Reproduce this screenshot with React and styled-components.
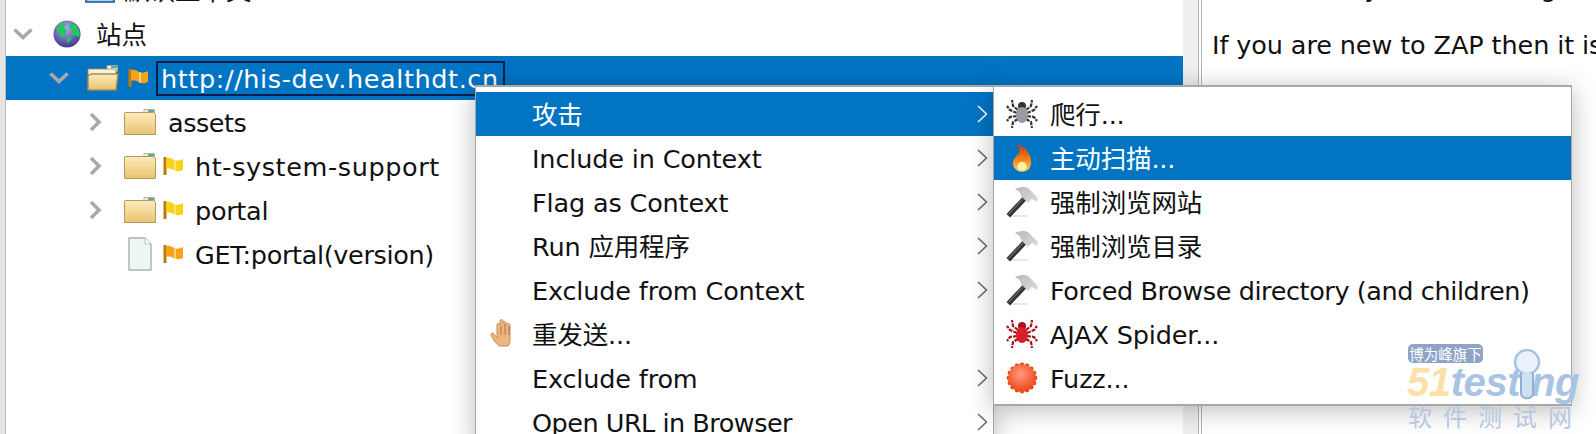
import React from 'react'
import styled, { createGlobalStyle } from 'styled-components'

const Global = createGlobalStyle`
    html, body { margin: 0; padding: 0; background: #fff; }
    #root { width: 1596px; height: 434px; overflow: hidden; }
`

const FONT = `"DejaVu Sans", "Noto Sans CJK SC", sans-serif`
const BLUE = '#0274c4'

const Page = styled.div`
    position: relative;
    width: 1596px;
    height: 434px;
    overflow: hidden;
    display: flex;
    font-family: ${FONT};
    font-size: 25.5px;
    line-height: 44px;
    color: #111;
    background: #fff;
`

const LeftEdge = styled.div`
    width: 5px;
    flex: none;
    background: #e4e4e4;
    border-right: 1px solid #bdbdbd;
`

const Tree = styled.div`
    width: 1177px;
    flex: none;
    margin-top: -32px;
`

const Row = styled.div`
    height: 44px;
    display: flex;
    align-items: center;
    padding-left: ${(p) => p.$indent}px;
    background: ${(p) => (p.$selected ? BLUE : 'transparent')};
    color: ${(p) => (p.$selected ? '#fff' : '#111')};
`

const Twisty = styled.svg`
    width: 20px;
    height: 20px;
    flex: none;
    margin-right: 16px;
`

const Spacer = styled.div`
    width: 36px;
    flex: none;
`

const IconSlot = styled.div`
    width: ${(p) => p.$w}px;
    height: 36px;
    flex: none;
    display: flex;
    align-items: center;
    justify-content: center;
`

const Label = styled.span`
    margin-left: ${(p) => p.$gap || 0}px;
    margin-top: 2px;
    white-space: nowrap;
    letter-spacing: ${(p) => p.$track || 0}px;
`

const Focus = styled.span`
    margin-left: 1px;
    padding: 1px 0 0 3px;
    height: 35px;
    width: 349px;
    box-sizing: border-box;
    display: flex;
    align-items: center;
    white-space: nowrap;
    border: 2px solid #0a1f4a;
    letter-spacing: 0.6px;
    overflow: hidden;
`

const Divider = styled.div`
    width: 15px;
    flex: none;
    background: #efefef;
    border-right: 1px solid #b5b5b5;
`

const Help = styled.div`
    flex: 1;
    border-left: 1px solid #b5b5b5;
    margin-left: 2px;
    padding-left: 10px;
    white-space: nowrap;
    overflow: hidden;
    line-height: 53px;
`

const HelpText = styled.div`
    margin-top: ${(p) => p.$top || 0}px;
    padding-left: ${(p) => p.$pad || 0}px;
    letter-spacing: -0.1px;
`

const Menu = styled.div`
    position: absolute;
    top: 85px;
    left: ${(p) => p.$left}px;
    width: ${(p) => p.$width}px;
    box-sizing: border-box;
    padding: 5px 0 4px;
    background: #fff;
    border: 1px solid #a8a8a8;
    border-width: 2px 1px 2px 1px;
    box-shadow: 0 4px 24px rgba(0, 0, 0, 0.27);
    z-index: ${(p) => p.$z};
`

const Item = styled.div`
    height: 44px;
    display: flex;
    align-items: center;
    background: ${(p) => (p.$active ? BLUE : 'transparent')};
    color: ${(p) => (p.$active ? '#fff' : '#111')};
`

const ItemIcon = styled.div`
    width: 56px;
    flex: none;
    display: flex;
    justify-content: center;
    align-items: center;
`

const ItemText = styled.span`
    flex: 1;
    margin-top: 2px;
    white-space: nowrap;
    letter-spacing: ${(p) => p.$track ?? -0.15}px;
`

const Arrow = styled.svg`
    width: 11px;
    height: 18px;
    flex: none;
    margin-right: 5px;
`

const Mark = styled.div`
    position: absolute;
    left: 1408px;
    top: 344px;
    width: 188px;
    height: 90px;
    z-index: 5;
    pointer-events: none;
`

const Badge = styled.div`
    position: absolute;
    left: 0;
    top: 0;
    width: 75px;
    height: 19px;
    border-radius: 5px;
    background: #8fa4c5;
    color: #fff;
    font: 14.5px "Noto Sans CJK SC", sans-serif;
    line-height: 19px;
    text-align: center;
    white-space: nowrap;
`

const BrandWord = styled.div`
    position: absolute;
    left: -1px;
    top: 21px;
    display: flex;
    font: italic 700 40px "Liberation Sans", sans-serif;
    line-height: 34px;
    letter-spacing: -0.4px;
    white-space: nowrap;
`

const BrandPart = styled.span`
    color: ${(p) => p.$color};
`

const BrandCn = styled.div`
    position: absolute;
    left: 0;
    top: 56px;
    width: 164px;
    display: flex;
    justify-content: space-between;
    color: #b6c8de;
    font: 24px "Noto Sans CJK SC", sans-serif;
    line-height: 32px;
`

const Lens = styled.svg`
    position: absolute;
    left: 105px;
    top: 5px;
`

function Chevron({ open }) {
    return (
        <Twisty viewBox="0 0 20 20">
            <path
                d={open ? 'M1.5 5.5l8.5 8 8.500-8' : 'M5 2l8 8-8 8'}
                fill="none"
                stroke="#a9a9a9"
                strokeWidth="3.6"
            />
        </Twisty>
    )
}

function Globe() {
    return (
        <svg width="28" height="28" viewBox="0 0 30 30">
            <defs>
                <radialGradient id="gl" cx="0.45" cy="0.3" r="0.8">
                    <stop offset="0" stopColor="#b4a8f0" />
                    <stop offset="1" stopColor="#2d2a80" />
                </radialGradient>
            </defs>
            <circle cx="15" cy="15" r="14.500" fill="url(#gl)" />
            <path d="M4 8l5-5 5 1-2 4 3 3-2 5-3 3-3-4-3-3zM18 3l7 3 4 8-1 5-3-2-5-1 1-4-3-3zM15 18l5 1-2 4-3 2z" fill="#22c85a" />
        </svg>
    )
}

function Folder({ open }) {
    return (
        <svg width="32" height="26" viewBox="0 0 32 26">
            <defs>
                <linearGradient id="fd" x1="0" y1="0" x2="0" y2="1">
                    <stop offset="0" stopColor="#fcecbc" />
                    <stop offset="1" stopColor="#eac272" />
                </linearGradient>
            </defs>
            <path d="M20 0.500h10.500v6H20z" fill="#f6f0dc" stroke="#b9a06a" strokeWidth="0.8" />
            <rect x="24" y="1" width="6" height="2" fill="#3fb0c8" />
            {open ? (
                <>
                    <path d="M1 4h28v6H1z" fill="#f8f2e0" stroke="#a58a4e" strokeWidth="0.8" />
                    <path d="M1 25V11l3-2h27l-2 16z" fill="url(#fd)" stroke="#a58a4e" strokeWidth="1.4" />
                </>
            ) : (
                <path d="M1 3.500h28.500l2 1.500v20.500H0.500V4z" fill="url(#fd)" stroke="#b59a5c" strokeWidth="1" />
            )}
        </svg>
    )
}

function Flag({ color }) {
    return (
        <svg width="22" height="20" viewBox="0 0 22 20">
            <path d="M3 1v18" stroke="#b97a12" strokeWidth="3" />
            <path d="M4 2c4-1 6 1 8 2s5 1 9-1v11c-4 2-7 1-9 0s-5-2-8-1z" fill={color} />
            <path d="M13 4v11" stroke="#fff3b0" strokeWidth="1.2" />
        </svg>
    )
}

function FilePage() {
    return (
        <svg width="26" height="34" viewBox="0 0 26 34">
            <path d="M2 1h16l6 6v26H2z" fill="#eef5f5" stroke="#a4b4b4" strokeWidth="1.4" />
            <path d="M18 1v6h6" fill="#fff" stroke="#b8c4c4" />
        </svg>
    )
}

function Hand() {
    return (
        <svg width="28" height="32" viewBox="0 0 28 32">
            <path d="M9 28c-3-2-7-8-8-11 0-2 2-3 3-1l3 4V7c0-2 3-2 3 0V3c0-2 3-2 3 0v2c0-2 3-2 3 0v2c0-2 4-2 4 0v15c0 3-1 5-2 6z" fill="#eeb57c" stroke="#c4925c" strokeWidth="1" />
            <path d="M11 8v9M15 6v11M19 8v9" stroke="#a87440" strokeWidth="1" />
        </svg>
    )
}

function Spider({ color, body }) {
    return (
        <svg width="32" height="32" viewBox="0 0 32 32">
            <g fill="none" stroke={color} strokeWidth="2.2" strokeDasharray="4 1">
                <path d="M12 12L7 8 6 2M20 12l5-4 1-6" />
                <path d="M11 15L4 12 1 8M21 15l7-3 3-4" />
                <path d="M11 18l-7 1-3 4M21 18l7 1 3 4" />
                <path d="M12 21l-5 3-1 6M20 21l5 3 1 6" />
            </g>
            <circle cx="16" cy="8" r="4" fill={color} />
            <ellipse cx="16" cy="17" rx="6" ry="8" fill={body} />
        </svg>
    )
}

function Flame() {
    return (
        <svg width="20" height="30" viewBox="0 0 22 32">
            <defs>
                <linearGradient id="fl" x1="0" y1="0" x2="0" y2="1">
                    <stop offset="0" stopColor="#c8380c" />
                    <stop offset="0.6" stopColor="#f58a1a" />
                    <stop offset="1" stopColor="#ffd860" />
                </linearGradient>
            </defs>
            <path d="M4 1c9 1 17 9 17 19 0 7-4 11-10 11S1 27 1 21c0-5 5-7 7-11 1-3 0-6-4-9z" fill="url(#fl)" />
            <ellipse cx="11" cy="25" rx="5" ry="5" fill="#fff2a8" />
        </svg>
    )
}

function Hammer() {
    return (
        <svg width="32" height="32" viewBox="0 0 32 32">
            <defs>
                <linearGradient id="hm" x1="0" y1="0" x2="1" y2="1">
                    <stop offset="0" stopColor="#b8b8b8" />
                    <stop offset="1" stopColor="#dedede" />
                </linearGradient>
            </defs>
            <path d="M4 30h18" stroke="#e8e8e8" strokeWidth="2" />
            <path d="M0.500 28l3.500 3.500 17-18-3.500-3.500z" fill="#333" />
            <path d="M2.500 28.500l14.500-15.500" stroke="#888" strokeWidth="1" fill="none" />
            <path d="M9 3c4-2 9-3 13-1l10 10-1 4-5-3-4 4-7-7c0-3-2-5-6-7z" fill="url(#hm)" />
        </svg>
    )
}

function Burst() {
    const teeth = []
    for (let i = 0; i < 16; i++) {
        const a = (i * Math.PI) / 8
        teeth.push(
            <circle key={i} cx={16 + 13 * Math.cos(a)} cy={16 + 13 * Math.sin(a)} r="2.4" fill="#ee4a14" />
        )
    }
    return (
        <svg width="32" height="32" viewBox="0 0 32 32">
            <defs>
                <radialGradient id="bs" cx="0.45" cy="0.35" r="0.75">
                    <stop offset="0" stopColor="#ff9a7c" />
                    <stop offset="1" stopColor="#ee3a0c" />
                </radialGradient>
            </defs>
            {teeth}
            <circle cx="16" cy="16" r="13.500" fill="url(#bs)" />
        </svg>
    )
}

function MenuArrow({ active }) {
    return (
        <Arrow viewBox="0 0 11 18">
            <path d="M1 1l8.500 8L1 17" fill="none" stroke={active ? '#fff' : '#666'} strokeWidth="1.500" />
        </Arrow>
    )
}

const attackMenu = [
    { label: '攻击', arrow: true, active: true },
    { label: 'Include in Context', arrow: true },
    { label: 'Flag as Context', arrow: true },
    { label: 'Run 应用程序', arrow: true },
    { label: 'Exclude from Context', arrow: true },
    { label: '重发送...', icon: <Hand /> },
    { label: 'Exclude from', arrow: true },
    { label: 'Open URL in Browser', arrow: true, track: -0.5 },
]

const scanMenu = [
    { label: '爬行...', icon: <Spider color="#333" body="#9a9aa4" /> },
    { label: '主动扫描...', icon: <Flame />, active: true },
    { label: '强制浏览网站', icon: <Hammer /> },
    { label: '强制浏览目录', icon: <Hammer /> },
    { label: 'Forced Browse directory (and children)', icon: <Hammer />, track: -0.4 },
    { label: 'AJAX Spider...', icon: <Spider color="#a8101c" body="#d8202c" /> },
    { label: 'Fuzz...', icon: <Burst /> },
]

const App = () => (
    <Page>
        <Global />
        <LeftEdge />
        <Tree>
            <Row $indent={76}>
                <IconSlot $w={36}>
                    <svg width="30" height="26" viewBox="0 0 30 26">
                        <rect x="1" y="1" width="28" height="24" fill="#dce8f5" stroke="#3f78b8" strokeWidth="2.500" />
                    </svg>
                </IconSlot>
                <Label $gap={6}>默认上下文</Label>
            </Row>
            <Row $indent={7}>
                <Chevron open />
                <IconSlot $w={36}>
                    <Globe />
                </IconSlot>
                <Label $gap={11}>站点</Label>
            </Row>
            <Row $selected $indent={43}>
                <Chevron open />
                <IconSlot $w={36}>
                    <Folder open />
                </IconSlot>
                <IconSlot $w={34}>
                    <Flag color="#f6a21a" />
                </IconSlot>
                <Focus>http://his-dev.healthdt.cn</Focus>
            </Row>
            <Row $indent={80}>
                <Chevron />
                <IconSlot $w={36}>
                    <Folder />
                </IconSlot>
                <Label $gap={10} $track={-0.5}>assets</Label>
            </Row>
            <Row $indent={80}>
                <Chevron />
                <IconSlot $w={36}>
                    <Folder />
                </IconSlot>
                <IconSlot $w={30}>
                    <Flag color="#f6d21a" />
                </IconSlot>
                <Label $gap={7} $track={0.6}>ht-system-support</Label>
            </Row>
            <Row $indent={80}>
                <Chevron />
                <IconSlot $w={36}>
                    <Folder />
                </IconSlot>
                <IconSlot $w={30}>
                    <Flag color="#f6d21a" />
                </IconSlot>
                <Label $gap={7} $track={-0.3}>portal</Label>
            </Row>
            <Row $indent={80}>
                <Spacer />
                <IconSlot $w={36}>
                    <FilePage />
                </IconSlot>
                <IconSlot $w={30}>
                    <Flag color="#f6a21a" />
                </IconSlot>
                <Label $gap={7} $track={-0.35}>GET:portal(version)</Label>
            </Row>
        </Tree>
        <Divider />
        <Help>
            <HelpText $top={-38} $pad={73}>already contains msg u</HelpText>
            <HelpText $top={4}>If you are new to ZAP then it is</HelpText>
        </Help>
        <Menu $left={475} $width={519} $z={2}>
            {attackMenu.map((m) => (
                <Item key={m.label} $active={m.active}>
                    <ItemIcon>{m.icon}</ItemIcon>
                    <ItemText $track={m.track}>{m.label}</ItemText>
                    {m.arrow && <MenuArrow active={m.active} />}
                </Item>
            ))}
        </Menu>
        <Menu $left={993} $width={579} $z={3}>
            {scanMenu.map((m) => (
                <Item key={m.label} $active={m.active}>
                    <ItemIcon>{m.icon}</ItemIcon>
                    <ItemText $track={m.track}>{m.label}</ItemText>
                </Item>
            ))}
        </Menu>
        <Mark>
            <Badge>博为峰旗下</Badge>
            <BrandWord>
                <BrandPart $color="#fce0a6">51</BrandPart>
                <BrandPart $color="#a9c4e2">testing</BrandPart>
            </BrandWord>
            <BrandCn>
                <span>软</span>
                <span>件</span>
                <span>测</span>
                <span>试</span>
                <span>网</span>
            </BrandCn>
            <Lens width="28" height="52" viewBox="0 0 28 52">
                <circle cx="14" cy="13" r="12" fill="#eaf3fb" stroke="#a9c4e2" strokeWidth="2.500" />
                <path d="M8 24v20c0 7 12 7 12 0V24" fill="#cfe0f0" stroke="#8fb0d4" strokeWidth="2" />
            </Lens>
        </Mark>
    </Page>
)

export default App
